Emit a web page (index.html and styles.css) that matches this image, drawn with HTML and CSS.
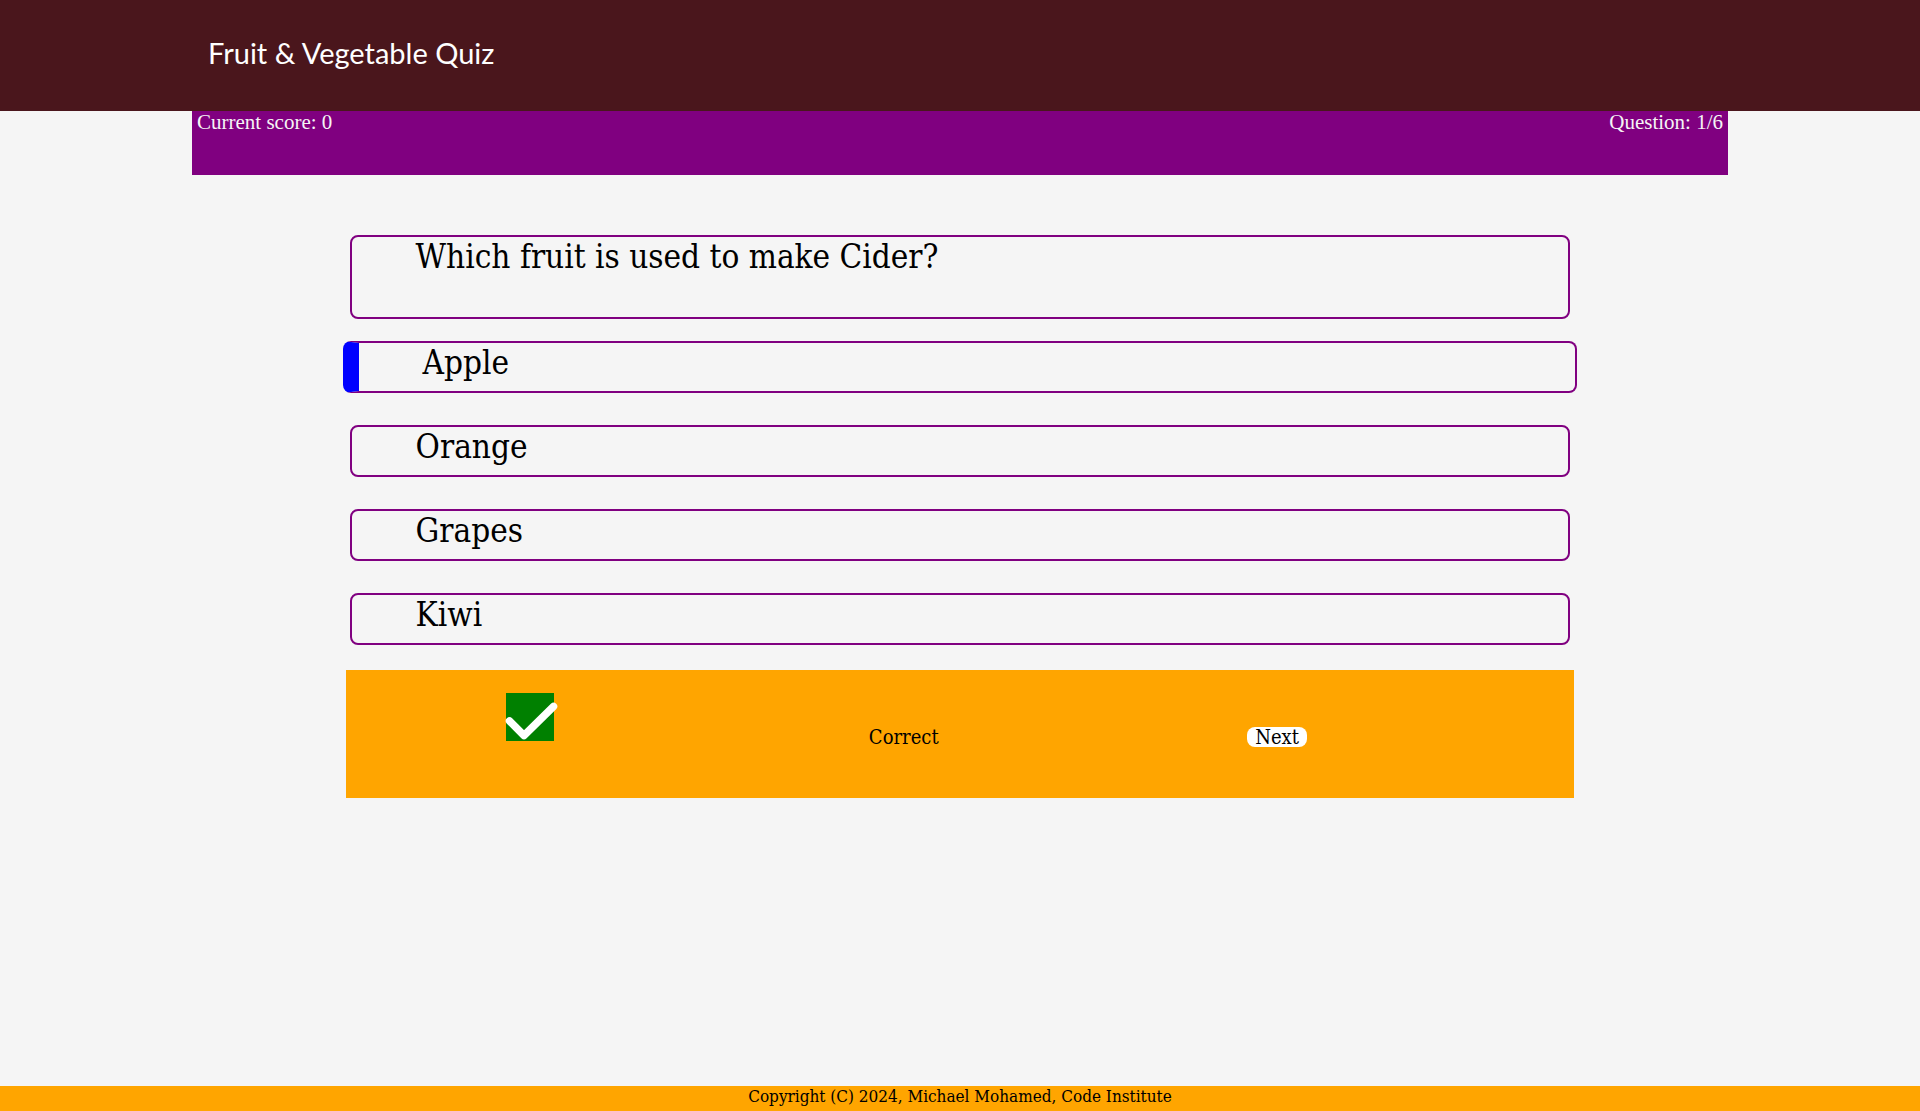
FILE: index.html
```html
<!DOCTYPE html>
<html lang="en">
<head>
<meta charset="utf-8">
<meta name="viewport" content="width=device-width, initial-scale=1">
<title>Fruit &amp; Vegetable Quiz</title>
<link rel="stylesheet" href="styles.css">
</head>
<body>
<header class="site-header">
  <h1 class="site-title">Fruit &amp; Vegetable Quiz</h1>
</header>
<main class="quiz">
  <div class="status">
    <span>Current score: 0</span>
    <span>Question: 1/6</span>
  </div>
  <section class="round">
    <h2 class="question">Which fruit is used to make Cider?</h2>
    <div class="answers">
      <button class="answer answer-selected" type="button" aria-pressed="true">Apple</button>
      <button class="answer" type="button">Orange</button>
      <button class="answer" type="button">Grapes</button>
      <button class="answer" type="button">Kiwi</button>
    </div>
    <div class="result">
      <svg class="result-icon" viewBox="0 0 48 48" aria-hidden="true">
        <rect width="48" height="48" fill="green"/>
        <path d="M3.5 28L18 42.500L47.500 13.500" fill="none" stroke="white" stroke-width="7.500" stroke-linecap="round" stroke-linejoin="round"/>
      </svg>
      <p class="result-text">Correct</p>
      <button class="next" type="button">Next</button>
    </div>
  </section>
</main>
<footer class="site-footer">Copyright (C) 2024, Michael Mohamed, Code Institute</footer>
</body>
</html>
```

FILE: styles.css
```css
* {
  box-sizing: border-box;
  margin: 0;
  padding: 0;
}

body {
  display: flex;
  flex-direction: column;
  min-height: 100vh;
  background: #f5f5f5;
  color: #000;
  font-family: "DejaVu Serif Condensed", "DejaVu Serif", serif;
}

button {
  border: 0;
  color: inherit;
  font-family: inherit;
  cursor: pointer;
}

.site-header {
  padding: 29px 10% 34px;
  background: #4a161c;
  color: #fff;
}

.site-title {
  padding-left: 16px;
  font-family: Lato, sans-serif;
  font-size: 29px;
  font-weight: 400;
  line-height: 48px;
}

.quiz {
  flex: 1;
}

.status {
  display: flex;
  justify-content: space-between;
  width: 80%;
  height: 64px;
  margin: 0 auto;
  padding: 0 5px;
  background: purple;
  color: #f5f5f5;
  font-family: "Liberation Serif", serif;
  font-size: 21px;
  line-height: 22px;
}

.round {
  width: 64%;
  margin: 60px auto 0;
}

.question,
.answer {
  border: 2px solid purple;
  border-radius: 8px;
  padding-left: 64px;
  background: none;
  font-size: 33px;
  font-weight: 400;
  line-height: 40px;
  text-align: left;
}

.question {
  min-height: 84px;
  margin: 0 4px 22px;
}

.answers {
  display: grid;
  gap: 32px;
}

.answer {
  min-height: 52px;
  margin: 0 4px;
  padding-bottom: 8px;
}

.answer-selected {
  margin: 0 -3px;
  border-left: 16px solid blue;
}

.result {
  display: grid;
  grid-template-columns: 363fr 378fr 327fr;
  align-items: start;
  justify-items: start;
  min-height: 128px;
  margin-top: 25px;
  padding: 23px 0 0 160px;
  background: orange;
}

.result-icon {
  width: 48px;
  height: 48px;
  overflow: visible;
}

.result-text,
.next {
  margin-top: 34px;
  font-size: 20px;
  line-height: 20px;
}

.next {
  padding: 0 8px;
  border-radius: 8px;
  background: #fff;
}

.site-footer {
  padding: 0 16px 4px;
  background: orange;
  font-size: 17px;
  line-height: 21px;
  text-align: center;
}
```
